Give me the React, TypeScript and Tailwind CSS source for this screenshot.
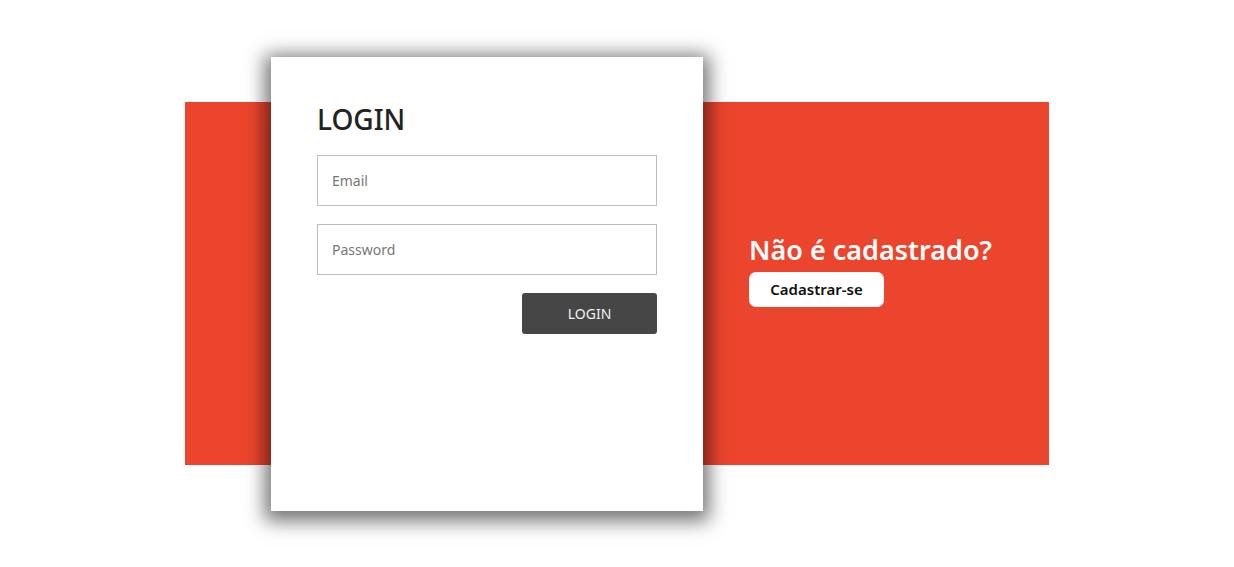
export default function App() {
  return (
    <div className="flex h-[567px] w-full items-center justify-center bg-white font-['Noto_Sans',sans-serif]">
      <div className="flex h-[363px] w-[864px] items-center bg-[#ec452d]">
        <div className="ml-[86px] flex h-[454px] w-[432px] shrink-0 flex-col bg-white px-[46px] pt-[47px] shadow-[0_4px_18px_6px_rgba(0,0,0,0.55)]">
          <h1 className="text-[28px] font-medium leading-[30px] text-[#222]">LOGIN</h1>
          <form className="mt-[21px] flex flex-col gap-[18px]">
            <input
              type="email"
              placeholder="Email"
              className="h-[51px] w-full border border-[#bdbdbd] px-[14px] text-[14px] text-[#333] outline-none placeholder:text-[#777]"
            />
            <input
              type="password"
              placeholder="Password"
              className="h-[51px] w-full border border-[#bdbdbd] px-[14px] text-[14px] text-[#333] outline-none placeholder:text-[#777]"
            />
            <div className="flex justify-end">
              <button
                type="button"
                className="h-[41px] w-[135px] rounded-[3px] bg-[#464646] text-[14px] text-[#f0f0f0]"
              >
                LOGIN
              </button>
            </div>
          </form>
        </div>
        <div className="ml-[46px] -mt-[26px] flex flex-col items-start">
          <h2 className="text-[27px] font-semibold leading-[32px] text-white">Não é cadastrado?</h2>
          <button
            type="button"
            className="mt-[6px] h-[35px] w-[135px] rounded-[7px] bg-white text-[15px] font-semibold text-[#111]"
          >
            Cadastrar-se
          </button>
        </div>
      </div>
    </div>
  );
}
